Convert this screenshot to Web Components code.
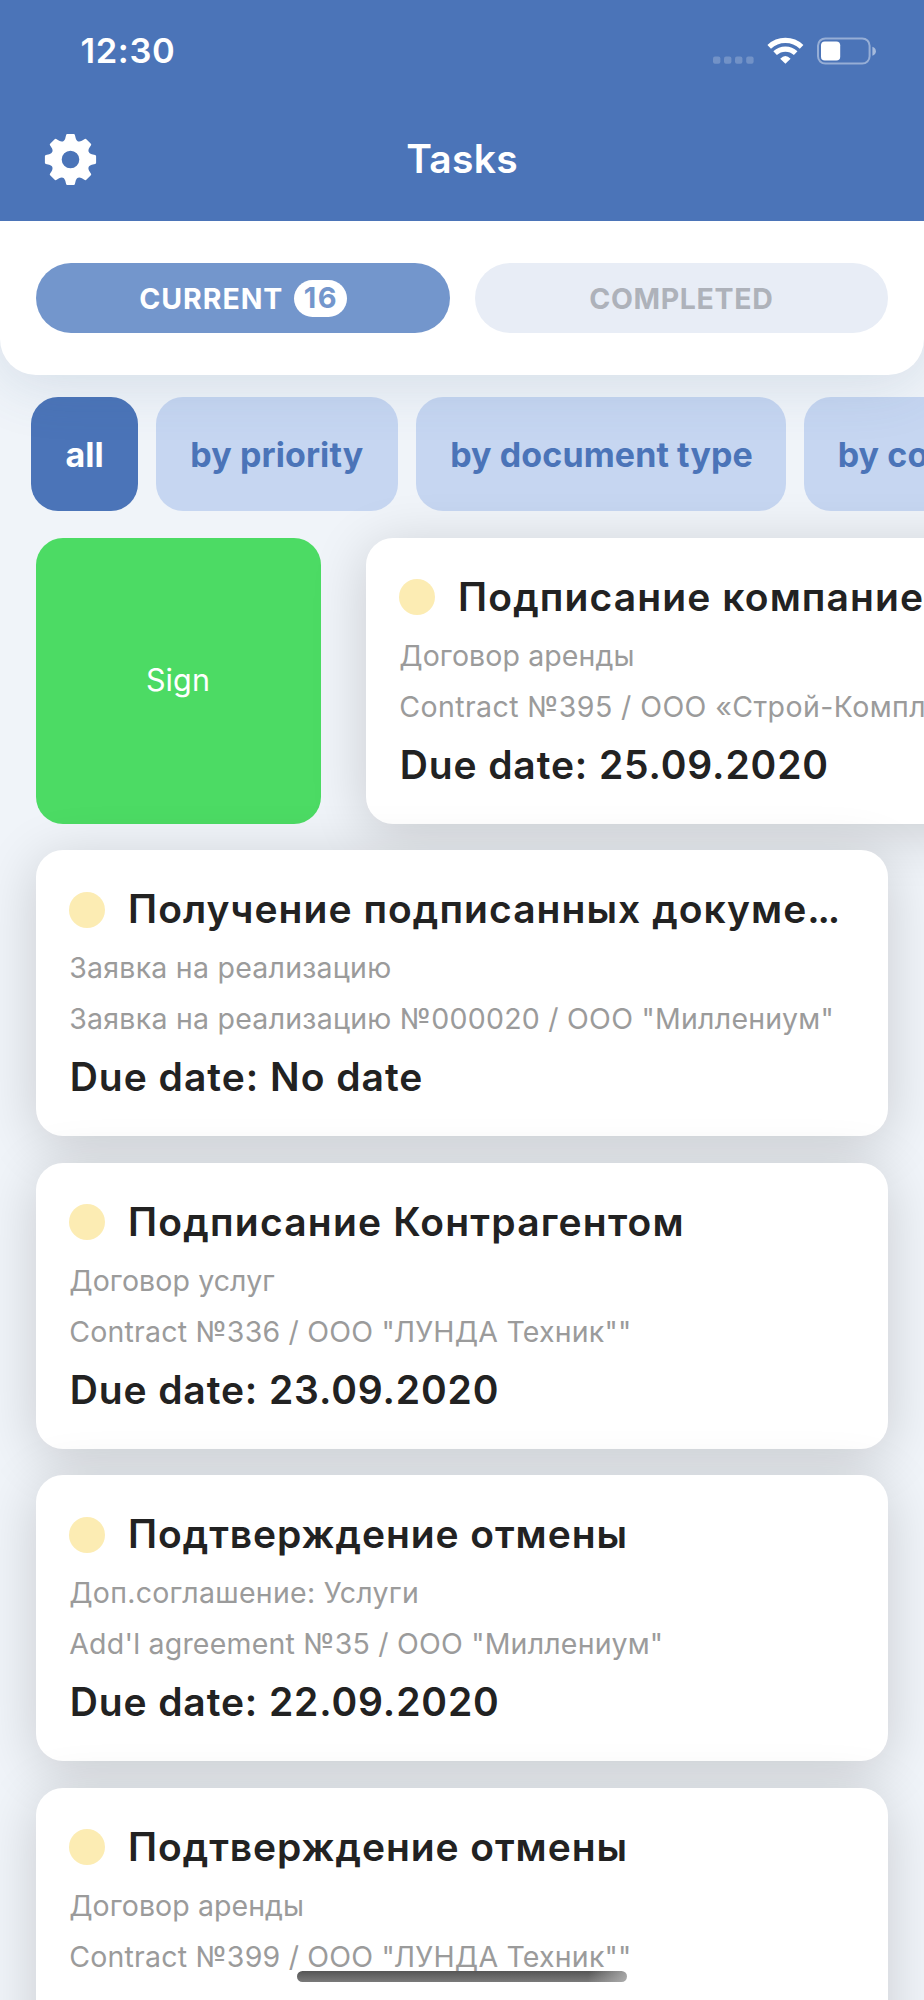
<!DOCTYPE html>
<html lang="ru">
<head>
<meta charset="utf-8">
<title>Tasks</title>
<style>
  html, body { margin: 0; padding: 0; }
  body { font-family: Inter, "Noto Sans", sans-serif; background: #f0f4f9; }
</style>
</head>
<body>
<task-app>
  <app-header slot="header" time="12:30">Tasks</app-header>
  <tab-panel slot="tabs">
    <tab-pill active count="16" style="letter-spacing:.965px">CURRENT</tab-pill>
    <tab-pill style="letter-spacing:.647px">COMPLETED</tab-pill>
  </tab-panel>
  <filter-chip slot="filters" active style="width:107px">all</filter-chip>
  <filter-chip slot="filters" style="width:242px">by priority</filter-chip>
  <filter-chip slot="filters" style="width:369.6px">by document type</filter-chip>
  <filter-chip slot="filters">by contractor</filter-chip>

  <swipe-row>
    <swipe-action slot="action">Sign</swipe-action>
    <task-card style="--title-ls:1.116px;--type-ls:.1px;--doc-ls:.41px">
      <span slot="title">Подписание компанией</span>
      <span slot="type">Договор аренды</span>
      <span slot="doc">Contract №395 / ООО «Строй-Комплект»</span>
      <span slot="due">25.09.2020</span>
    </task-card>
  </swipe-row>
  <task-card style="--title-ls:1.05px;--type-ls:.243px;--doc-ls:.25px;--due-ls:1px">
    <span slot="title">Получение подписанных докуме<span style="letter-spacing:-2.2px">...</span></span>
    <span slot="type">Заявка на реализацию</span>
    <span slot="doc">Заявка на реализацию №000020 / ООО "Миллениум"</span>
    <span slot="due">No date</span>
  </task-card>
  <task-card style="--title-ls:1.2px;--type-ls:.1px">
    <span slot="title">Подписание Контрагентом</span>
    <span slot="type">Договор услуг</span>
    <span slot="doc">Contract №336 / ООО "ЛУНДА Техник""</span>
    <span slot="due">23.09.2020</span>
  </task-card>
  <task-card style="--type-ls:.27px">
    <span slot="title">Подтверждение отмены</span>
    <span slot="type">Доп.соглашение: Услуги</span>
    <span slot="doc">Add'l agreement №35 / ООО "Миллениум"</span>
    <span slot="due">22.09.2020</span>
  </task-card>
  <task-card style="--type-ls:.07px">
    <span slot="title">Подтверждение отмены</span>
    <span slot="type">Договор аренды</span>
    <span slot="doc">Contract №399 / ООО "ЛУНДА Техник""</span>
    <span slot="due">22.09.2020</span>
  </task-card>
</task-app>

<script>
const define = (name, html, setup) => customElements.define(name, class extends HTMLElement {
  constructor() {
    super();
    const t = document.createElement('template');
    t.innerHTML = html;
    this.attachShadow({ mode: 'open' }).append(t.content.cloneNode(true));
    if (setup) setup(this, this.shadowRoot);
  }
});

define('task-app', `
  <style>
    :host { display: block; position: relative; width: 924px; height: 2000px; overflow: hidden; background: #f0f4f9; }
    .filters { display: flex; gap: 17.9px; margin: 22px 0 0 31.3px; height: 114.3px; }
    .list { display: flex; flex-direction: column; gap: 26.8px; padding: 26.7px 36px 0; }
    .home { position: absolute; left: 297px; top: 1971px; width: 330px; height: 11px; border-radius: 5.5px;
      background: linear-gradient(100deg, transparent 88%, rgba(190,190,190,.75) 100%), linear-gradient(#555, #7a7a7a); }
  </style>
  <slot name="header"></slot>
  <slot name="tabs"></slot>
  <div class="filters"><slot name="filters"></slot></div>
  <div class="list"><slot></slot></div>
  <div class="home"></div>`);

// Eight-tooth gear: one tooth and the valley after it, repeated every 45 degrees.
function gearPath() {
  let d = '';
  for (let i = 0; i < 8; i++) {
    const a = i * Math.PI / 4, c = Math.cos(a), s = Math.sin(a);
    const p = (x, y) => (x * c - y * s).toFixed(2) + ' ' + (x * s + y * c).toFixed(2);
    d += (i ? 'L' : 'M') + p(-5.2, -21.3) + 'L' + p(-4.4, -24.6) + 'Q' + p(-4.2, -25.6) + ' ' + p(-3.2, -25.6) +
      'L' + p(3.2, -25.6) + 'Q' + p(4.2, -25.6) + ' ' + p(4.4, -24.6) + 'L' + p(5.2, -21.3) +
      'C' + p(6.2, -18) + ' ' + p(8.35, -17.1) + ' ' + p(11.4, -18.7);
  }
  return d + 'ZM8.8 0A8.8 8.8 0 1 0 -8.8 0A8.8 8.8 0 1 0 8.8 0Z';
}

define('app-header', `
  <style>
    :host { display: block; position: relative; z-index: 2; height: 221px; background: #4b74b8; color: #fff; font-weight: 600; }
    .status { display: flex; align-items: center; height: 101.5px; padding: 0 47px 0 80.5px; }
    .time { font-size: 34.5px; letter-spacing: .617px; margin-right: auto; }
    svg { display: block; }
    nav { display: grid; grid-template-columns: 1fr auto 1fr; align-items: center; height: 116px; padding: 0 44px; }
    .title { font-size: 39px; letter-spacing: .272px; line-height: 48px; padding-bottom: 2px; }
  </style>
  <div class="status">
    <span class="time"></span>
    <svg width="164" height="28" viewBox="713 36.5 164 28" fill="#fff">
      <g fill-opacity=".22"><rect x="713" y="56" width="7.4" height="7.2" rx="2"/><rect x="724" y="56" width="7.4" height="7.2" rx="2"/><rect x="735" y="56" width="7.4" height="7.2" rx="2"/><rect x="746.2" y="56" width="7.4" height="7.2" rx="2"/></g>
      <g fill="none" stroke="#fff" stroke-width="5.2">
        <path d="M769.2 46.4A23.6 23.6 0 0 1 801.6 46.4"/>
        <path d="M775.1 52.6A15.2 15.2 0 0 1 795.7 52.6"/>
      </g>
      <path d="M785.4 63.3L780.2 58.2Q785.4 53 790.6 58.2Z"/>
      <rect x="818" y="37.9" width="51.6" height="25.2" rx="7.4" fill="none" stroke="#fff" stroke-opacity=".42" stroke-width="2"/>
      <rect x="821" y="41" width="19.2" height="19" rx="3.8"/>
      <path d="M872.4 46.2Q875.9 47.6 875.9 50.7Q875.9 53.8 872.4 55.2Z" fill-opacity=".5"/>
    </svg>
  </div>
  <nav>
    <svg width="53" height="53" viewBox="-26.5 -26.5 53 53"><path fill="#fff" fill-rule="evenodd"/></svg>
    <span class="title"><slot></slot></span>
    <span></span>
  </nav>`, (el, root) => {
  root.querySelector('.time').textContent = el.getAttribute('time');
  root.querySelector('nav path').setAttribute('d', gearPath());
});

define('tab-panel', `
  <style>
    :host { display: grid; grid-template-columns: 414px 413.4px; justify-content: space-between; align-items: center;
      position: relative; z-index: 1; box-sizing: border-box; height: 154px; padding: 0 36px; background: #fff;
      border-radius: 0 0 36px 36px; box-shadow: 0 9px 60px rgba(60,105,140,.16); }
  </style>
  <slot></slot>`);

define('tab-pill', `
  <style>
    :host { display: flex; align-items: center; justify-content: center; gap: 10.5px; height: 70px; border-radius: 35px;
      background: #e8edf6; color: #aeb2ba; font-size: 28.5px; font-weight: 700; line-height: 34px; }
    :host([active]) { background: #7396cc; color: #fff; }
    .label { padding-top: 2px; }
    .count { box-sizing: border-box; width: 53px; height: 37px; margin-top: 1px; line-height: 36px; border-radius: 18.5px; padding-left: 1px;
      background: #fff; color: #7396cc; text-align: center; letter-spacing: 1.4px; font-size: 29px; }
  </style>
  <span class="label"><slot></slot></span>`, (el, root) => {
  if (el.hasAttribute('count')) {
    const b = document.createElement('span');
    b.className = 'count';
    b.textContent = el.getAttribute('count');
    root.append(b);
  }
});

define('filter-chip', `
  <style>
    :host { display: flex; flex: none; box-sizing: border-box; align-items: center; padding: 0 34.1px; border-radius: 27px;
      background: #c6d6f1; color: #4b74b8; font-size: 34px; font-weight: 700; letter-spacing: .1px; white-space: nowrap; }
    :host([active]) { background: #4b74b8; color: #fff; }
    span { padding-top: 1px; }
  </style>
  <span><slot></slot></span>`);

define('swipe-row', `
  <style>
    :host { display: flex; gap: 45px; }
    ::slotted(task-card) { flex: none; width: 852px; }
  </style>
  <slot name="action"></slot><slot></slot>`);

define('swipe-action', `
  <style>
    :host { display: flex; flex: none; box-sizing: border-box; align-items: center; justify-content: center; width: 285px; height: 285.7px;
      padding: 0 1px 2px 0; border-radius: 27px; background: #4cdb64; color: #fff; font-size: 30.5px; letter-spacing: .11px; }
  </style>
  <slot></slot>`);

define('task-card', `
  <style>
    :host { display: block; box-sizing: border-box; height: 285.7px; padding: 32.5px 33.2px 0; border-radius: 27px;
      background: #fff; box-shadow: 0 9px 56px rgba(0,5,5,.165); white-space: nowrap; overflow: hidden; }
    .head { display: flex; align-items: center; gap: 22.9px; height: 54px; }
    .dot { flex: none; width: 36px; height: 36px; border-radius: 50%; background: #fcecb3; }
    .title, .due { font-size: 39px; font-weight: 600; color: #222; }
    .title { letter-spacing: var(--title-ls, .93px); padding-bottom: 2px; }
    .meta { font-size: 28.5px; line-height: 51.4px; color: #9b9b9b; }
    .type { margin-top: 5.3px; letter-spacing: var(--type-ls, .2px); }
    .doc { margin-top: -.2px; letter-spacing: var(--doc-ls, .21px); }
    .due { line-height: 54px; margin-top: 5.5px; padding-left: .5px; letter-spacing: var(--due-ls, .88px); }
  </style>
  <div class="head"><span class="dot"></span><span class="title"><slot name="title"></slot></span></div>
  <div class="meta type"><slot name="type"></slot></div>
  <div class="meta doc"><slot name="doc"></slot></div>
  <div class="due">Due date: <slot name="due"></slot></div>`);
</script>
</body>
</html>
